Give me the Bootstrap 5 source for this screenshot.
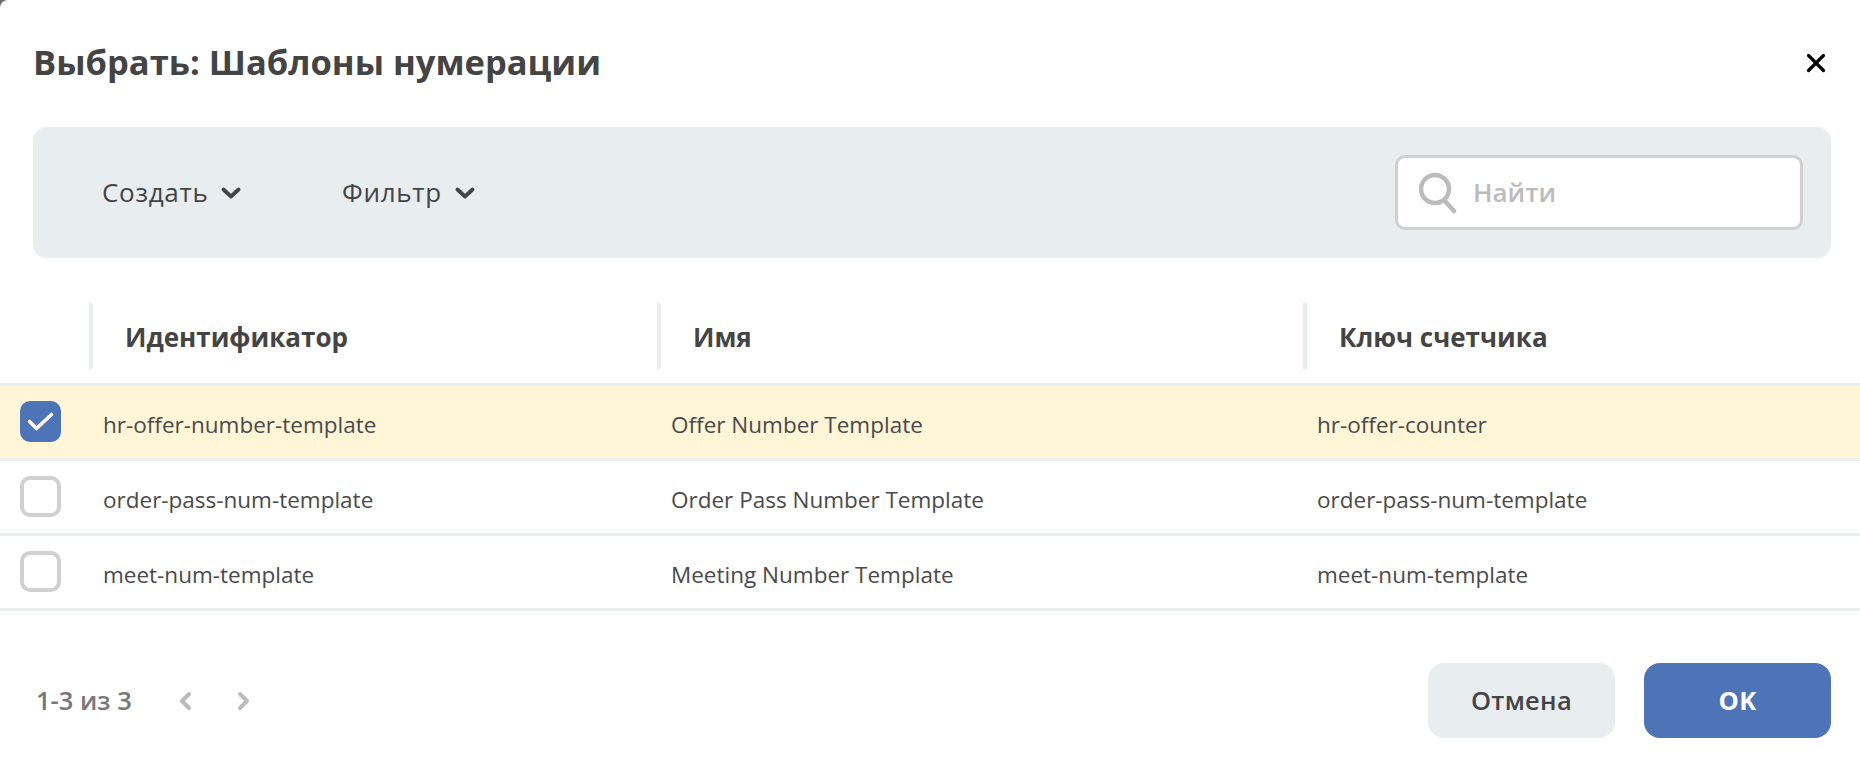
<!DOCTYPE html>
<html lang="ru">
<head>
    <meta charset="UTF-8">
    <meta name="viewport" content="width=device-width, initial-scale=1.0">
    <title>Выбрать: Шаблоны нумерации</title>
    <link href="https://cdn.jsdelivr.net/npm/bootstrap@5.3.2/dist/css/bootstrap.min.css" rel="stylesheet">
    <style>
        html, body {
            height: 100%;
        }
        body {
            background-color: #6b6b6b;
            font-family: "Open Sans", "Noto Sans", sans-serif;
            color: #444;
            overflow: hidden;
        }
        .picker {
            height: 759px;
            border: 0;
            border-radius: 8px 0 0 0;
        }
        .picker-head {
            padding: 40px 32px 0 33px;
            height: 127px;
            align-items: flex-start;
            flex-shrink: 0;
        }
        .picker-title {
            font-size: 34.5px;
            font-weight: 700;
            line-height: 44px;
            color: #444;
        }
        .close-x {
            margin: 11px 0 0 0;
            color: #000;
        }
        .tool-bar {
            margin: 0 29px 0 33px;
            height: 131px;
            flex-shrink: 0;
            padding: 0 28px 0 40px;
            background-color: #e8edf0;
            border-radius: 14px;
        }
        .tool-btn {
            font-size: 26px;
            letter-spacing: .7px;
            color: #444;
            padding: 0 29px;
            border: 0;
            background: none;
            width: 240px;
            justify-content: flex-start;
        }
        .tool-btn svg {
            margin-left: 5px;
        }
        .search-box {
            width: 408px;
            height: 75px;
            border: 3px solid #d0d0d0;
            border-radius: 10px;
            background: #fff;
            padding-left: 21px;
        }
        .search-box input {
            border: 0;
            outline: 0;
            background: none;
            font-size: 26px;
            font-weight: 600;
            color: #444;
            width: 300px;
            margin-left: 14px;
        }
        .search-box input::placeholder {
            color: #bbb;
            opacity: 1;
        }
        .num-table {
            margin: 45px 0 0;
            table-layout: fixed;
            width: 1860px;
        }
        .num-table th {
            height: 81px;
            padding: 0;
            font-size: 26px;
            font-weight: 700;
            color: #444;
            border-bottom: 3px solid #e8edf0;
            vertical-align: top;
        }
        .head-cell {
            height: 66px;
            margin-left: -1px;
            border-left: 4px solid #e8edf0;
            padding: 16px 0 0 32px;
            line-height: 36px;
        }
        .num-table td {
            height: 75px;
            padding: 7px 0 0 13px;
            font-size: 22.5px;
            color: #4a4a4a;
            border-bottom: 3px solid #e8edf0;
            vertical-align: middle;
            background: none;
            box-shadow: none;
        }
        .num-table td.check-cell {
            padding: 0 0 0 20px;
        }
        .num-table tr.picked td {
            background-color: #fff5d7;
        }
        .tick {
            width: 41px;
            height: 41px;
            border: 4px solid #d0d0d0;
            border-radius: 10px;
            background: #fff;
        }
        .tick.on {
            background: #4c74b7;
            border-color: #4c74b7;
        }
        .picker-foot {
            padding: 0 29px 21px 36px;
        }
        .page-info {
            font-size: 25.5px;
            font-weight: 600;
            color: #777;
        }
        .act-btn {
            width: 187px;
            height: 75px;
            font-size: 25.5px;
            font-weight: 600;
            border-radius: 16px;
            border: 0;
            letter-spacing: .3px;
        }
        .act-cancel {
            background-color: #e8edf0;
            color: #444;
        }
        .act-ok {
            background-color: #4c74b7;
            color: #fff;
            font-weight: 700;
        }
        .foot-actions {
            gap: 29px;
        }
        .arrow-prev {
            margin-left: 45px;
        }
        .arrow-next {
            margin-left: 43px;
        }
    </style>
</head>
<body>
    <div class="modal-content picker bg-white">
        <div class="d-flex justify-content-between picker-head">
            <h1 class="picker-title m-0">Выбрать: Шаблоны нумерации</h1>
            <svg class="close-x" width="24" height="24" viewBox="0 0 24 24" fill="none" stroke="currentColor" stroke-width="3.2" stroke-linecap="round"><path d="M4.5 4.5 19.5 19.5M19.5 4.5 4.5 19.5"/></svg>
        </div>

        <div class="d-flex align-items-center justify-content-between tool-bar">
            <div class="d-flex">
                <button type="button" class="d-flex align-items-center gap-2 tool-btn">Создать
                    <svg width="20" height="12" viewBox="0 0 20 12" fill="none" stroke="#444" stroke-width="3.8" stroke-linecap="round" stroke-linejoin="round"><path d="M2.5 2.5 10 9.5 17.5 2.5"/></svg>
                </button>
                <button type="button" class="d-flex align-items-center gap-2 tool-btn">Фильтр
                    <svg width="20" height="12" viewBox="0 0 20 12" fill="none" stroke="#444" stroke-width="3.8" stroke-linecap="round" stroke-linejoin="round"><path d="M2.5 2.5 10 9.5 17.5 2.5"/></svg>
                </button>
            </div>
            <div class="d-flex align-items-center search-box">
                <svg width="38" height="42" viewBox="0 0 38 42" fill="none" stroke="#bbb" stroke-width="4.5" stroke-linecap="round"><circle cx="16" cy="17" r="14"/><path d="M25 28 35 39"/></svg>
                <input type="text" placeholder="Найти">
            </div>
        </div>

        <table class="table num-table">
            <colgroup>
                <col style="width: 90px">
                <col style="width: 568px">
                <col style="width: 646px">
                <col>
            </colgroup>
            <thead>
                <tr>
                    <th></th>
                    <th><div class="head-cell">Идентификатор</div></th>
                    <th><div class="head-cell">Имя</div></th>
                    <th><div class="head-cell">Ключ счетчика</div></th>
                </tr>
            </thead>
            <tbody>
                <tr class="picked">
                    <td class="check-cell">
                        <div class="tick on d-flex align-items-center justify-content-center">
                            <svg width="29" height="23" viewBox="0 0 29 23" fill="none" stroke="#fff7e6" stroke-width="3.6" stroke-linecap="round" stroke-linejoin="round"><path d="M3.5 11.5 10.5 18.5 25.5 4.5"/></svg>
                        </div>
                    </td>
                    <td>hr-offer-number-template</td>
                    <td>Offer Number Template</td>
                    <td>hr-offer-counter</td>
                </tr>
                <tr>
                    <td class="check-cell"><div class="tick"></div></td>
                    <td>order-pass-num-template</td>
                    <td>Order Pass Number Template</td>
                    <td>order-pass-num-template</td>
                </tr>
                <tr>
                    <td class="check-cell"><div class="tick"></div></td>
                    <td>meet-num-template</td>
                    <td>Meeting Number Template</td>
                    <td>meet-num-template</td>
                </tr>
            </tbody>
        </table>

        <div class="d-flex align-items-center justify-content-between picker-foot mt-auto">
            <div class="d-flex align-items-center">
                <span class="page-info">1-3 из 3</span>
                <svg class="arrow-prev" width="16" height="22" viewBox="0 0 16 22" fill="none" stroke="#bbb" stroke-width="4" stroke-linecap="round" stroke-linejoin="round"><path d="M12 4 5 11 12 18"/></svg>
                <svg class="arrow-next" width="16" height="22" viewBox="0 0 16 22" fill="none" stroke="#bbb" stroke-width="4" stroke-linecap="round" stroke-linejoin="round"><path d="M4 4 11 11 4 18"/></svg>
            </div>
            <div class="d-flex foot-actions">
                <button type="button" class="btn act-btn act-cancel">Отмена</button>
                <button type="button" class="btn act-btn act-ok">OK</button>
            </div>
        </div>
    </div>

    <script src="https://cdn.jsdelivr.net/npm/bootstrap@5.3.2/dist/js/bootstrap.bundle.min.js"></script>
</body>
</html>
